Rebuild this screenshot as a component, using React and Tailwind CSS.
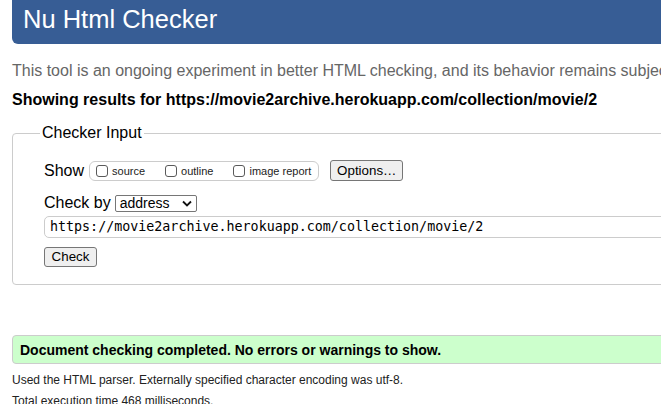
import React from "react";

const Box = () => (
  <span className="w-[12px] h-[12px] border border-[#5a5a5a] rounded-[3px] bg-white shrink-0" />
);

const App = () => {
  const shows = ["source", "outline", "image report"];

  return (
    <div className="w-[661px] h-[404px] overflow-hidden bg-white text-black font-['Liberation_Sans',Arial,sans-serif]">
      <div className="w-[1100px] pl-[12px]">
        {/* Title bar */}
        <h1 className="h-[44px] bg-[#375d95] text-white text-[25.5px] leading-[39px] pl-[11px] rounded-bl-[6px]">
          Nu Html Checker
        </h1>

        <p className="mt-[17px] text-[16px] leading-[20px] text-[#666] whitespace-nowrap">
          This tool is an ongoing experiment in better HTML checking, and its behavior remains subject to change
        </p>
        <p className="mt-[9px] text-[16px] leading-[20px] font-bold whitespace-nowrap">
          Showing results for https://movie2archive.herokuapp.com/collection/movie/2
        </p>

        {/* Checker input */}
        <fieldset className="mt-[13px] w-[1000px] border border-[#cccccc] rounded-[4px] pl-[27px] pb-[17px]">
          <legend className="px-[2px] text-[16px] leading-[20px]">Checker Input</legend>
          <div className="pl-[4px]">
            <div className="mt-[17px] flex items-center h-[21px]">
              <span className="text-[16px] leading-[20px]">Show</span>
              <div className="ml-[5px] h-[20px] flex items-center border border-[#cccccc] rounded-[6px] pl-[6px] pr-[7px]">
                {shows.map((s, i) => (
                  <label key={i} className={`flex items-center ${i < shows.length - 1 ? "mr-[20px]" : ""}`}>
                    <Box />
                    <span className="ml-[4px] text-[11px] leading-[14px] text-[#222]">{s}</span>
                  </label>
                ))}
              </div>
              <button className="ml-[11px] w-[73px] h-[21px] flex items-center justify-center bg-[#efefef] border border-[#767676] rounded-[3px] text-[13.33px] leading-[16px]">
                Options…
              </button>
            </div>

            <div className="mt-[12px] flex items-center h-[20px]">
              <span className="text-[16px] leading-[20px]">Check by</span>
              <div className="ml-[4px] w-[82px] h-[17px] flex items-center justify-between border border-[#767676] rounded-[2px] bg-white pl-[4px] pr-[4px]">
                <span className="text-[14px] leading-[15px]">address</span>
                <svg width="10" height="7" viewBox="0 0 10 7" className="shrink-0">
                  <path d="M1 1.5 L5 5.5 L9 1.5" fill="none" stroke="#111" strokeWidth="1.8" />
                </svg>
              </div>
            </div>

            <div className="mt-[3px] h-[22px] flex items-center border border-[#cccccc] rounded-l-[5px] pl-[5px] font-['DejaVu_Sans_Mono',monospace] text-[13.33px] leading-[16px] whitespace-nowrap">
              https://movie2archive.herokuapp.com/collection/movie/2
            </div>

            <button className="mt-[9px] w-[53px] h-[20px] flex items-center justify-center bg-[#efefef] border border-[#767676] rounded-[3px] text-[13.33px] leading-[16px]">
              Check
            </button>
          </div>
        </fieldset>

        {/* Result */}
        <div className="mt-[50px] h-[29px] flex items-center bg-[#ccffcc] border border-[#cccccc] rounded-[4px] pl-[7px]">
          <span className="text-[14px] leading-[16px] font-bold whitespace-nowrap">
            Document checking completed. No errors or warnings to show.
          </span>
        </div>
        <p className="mt-[9px] text-[12px] leading-[14px] text-[#222] whitespace-nowrap">
          Used the HTML parser. Externally specified character encoding was utf-8.
        </p>
        <p className="mt-[7px] text-[12px] leading-[14px] text-[#222] whitespace-nowrap">
          Total execution time 468 milliseconds.
        </p>
      </div>
    </div>
  );
};

export default App;
